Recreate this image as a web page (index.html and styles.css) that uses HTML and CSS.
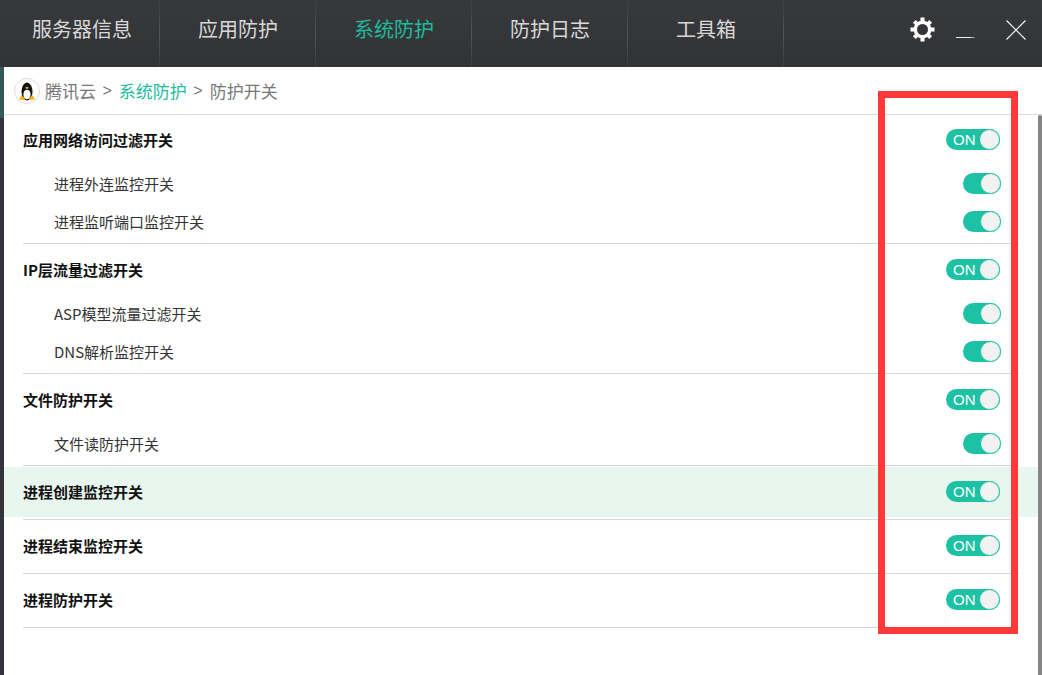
FILE: index.html
```html
<!DOCTYPE html>
<html lang="zh-CN">
<head>
<meta charset="utf-8">
<title>系统防护</title>
<link rel="stylesheet" href="styles.css">
</head>
<body>
<div class="app">
  <header class="topbar">
    <nav class="tabs">
      <a class="tab">服务器信息</a>
      <a class="tab">应用防护</a>
      <a class="tab active">系统防护</a>
      <a class="tab">防护日志</a>
      <a class="tab">工具箱</a>
    </nav>
    <div class="win-controls">
      <svg class="gear" width="25" height="25" viewBox="0 0 26 26">
        <g stroke="#fff" stroke-width="4.2" stroke-linecap="butt">
          <line x1="13" y1="0.5" x2="13" y2="25.5"/>
          <line x1="0.5" y1="13" x2="25.500" y2="13"/>
          <line x1="4.500" y1="4.500" x2="21.500" y2="21.500"/>
          <line x1="21.500" y1="4.500" x2="4.500" y2="21.500"/>
        </g>
        <circle cx="13" cy="13" r="7.500" fill="none" stroke="#fff" stroke-width="3.600"/>
        <circle cx="13" cy="13" r="5.700" fill="#343538"/>
      </svg>
      <span class="minimize"></span>
      <svg class="close" width="20" height="20" viewBox="0 0 20 20">
        <path d="M0.5 0.5L19.5 19.5M19.5 0.5L0.5 19.5" stroke="#fff" stroke-width="1.1" fill="none"/>
      </svg>
    </div>
  </header>
  <div class="body">
    <div class="crumbs">
      <svg class="logo" width="26" height="26" viewBox="0 0 26 26">
        <circle cx="13" cy="13" r="12.500" fill="#fff" stroke="#ddd"/>
        <ellipse cx="13" cy="13.500" rx="5.500" ry="9" fill="#111"/>
        <ellipse cx="13" cy="16.500" rx="3.600" ry="4.800" fill="#fff"/>
        <path d="M12 9h2l.8 1-1.800 1-1.800-1z" fill="#f5b400"/>
        <path d="M5 21.500l2.800-4.500 2.900 3.500 0 1.500z M21 21.500l-2.800-4.500-2.900 3.500 0 1.500z" fill="#f5b400"/>
      </svg>
      <span>腾讯云</span><span class="sep">&gt;</span><span class="current">系统防护</span><span class="sep">&gt;</span><span>防护开关</span>
    </div>
    <main class="settings">
      <section class="group">
        <div class="row head"><span>应用网络访问过滤开关</span><span class="switch labeled">ON<i class="knob"></i></span></div>
        <div class="row sub"><span>进程外连监控开关</span><span class="switch"><i class="knob"></i></span></div>
        <div class="row sub"><span>进程监听端口监控开关</span><span class="switch"><i class="knob"></i></span></div>
      </section>
      <section class="group">
        <div class="row head"><span>IP层流量过滤开关</span><span class="switch labeled">ON<i class="knob"></i></span></div>
        <div class="row sub"><span>ASP模型流量过滤开关</span><span class="switch"><i class="knob"></i></span></div>
        <div class="row sub"><span>DNS解析监控开关</span><span class="switch"><i class="knob"></i></span></div>
      </section>
      <section class="group">
        <div class="row head"><span>文件防护开关</span><span class="switch labeled">ON<i class="knob"></i></span></div>
        <div class="row sub"><span>文件读防护开关</span><span class="switch"><i class="knob"></i></span></div>
      </section>
      <section class="group hover">
        <div class="row head"><span>进程创建监控开关</span><span class="switch labeled">ON<i class="knob"></i></span></div>
      </section>
      <section class="group">
        <div class="row head"><span>进程结束监控开关</span><span class="switch labeled">ON<i class="knob"></i></span></div>
      </section>
      <section class="group">
        <div class="row head"><span>进程防护开关</span><span class="switch labeled">ON<i class="knob"></i></span></div>
      </section>
    </main>
    <div class="scrollbar"></div>
  </div>
  <div class="highlight-box"></div>
</div>
</body>
</html>
```
FILE: styles.css
```css
* { box-sizing: border-box; }
html, body { margin: 0; padding: 0; }
body {
  width: 1042px;
  height: 675px;
  overflow: hidden;
  background: #333437;
  font-family: "Noto Sans CJK SC", "Liberation Sans", sans-serif;
}
.app {
  position: relative;
  width: 1042px;
  height: 675px;
  display: flex;
  flex-direction: column;
}
.topbar {
  height: 67px;
  flex: none;
  padding-left: 4px;
  display: flex;
  justify-content: space-between;
  background: linear-gradient(#38393c, #323335);
}
.tabs { display: flex; }
.tab {
  width: 156px;
  display: flex;
  align-items: center;
  justify-content: center;
  padding: 0 0 10px 1px;
  font-size: 20px;
  color: #d8d8d8;
  border-right: 1px solid;
  border-image: linear-gradient(#3a3b3e, #55565a 50%, #3a3b3e) 1;
}
.tab.active { color: #1dbb9c; }
.win-controls {
  width: 132px;
  display: flex;
  align-items: flex-start;
}
.gear { margin: 17px 0 0 0; flex: none; }
.minimize {
  width: 19px;
  height: 1px;
  margin: 37px 0 0 21px;
  background: linear-gradient(90deg, #f0f0f0 70%, #77787a);
  flex: none;
}
.close { margin: 20px 0 0 31px; flex: none; }
.body {
  flex: 1;
  margin-left: 4px;
  display: flex;
  flex-direction: column;
  background: #fff;
  position: relative;
}
.body::before {
  content: "";
  position: absolute;
  left: -4px;
  top: 0;
  width: 4px;
  height: 51px;
  background: #2f5a55;
}
.crumbs {
  height: 48px;
  flex: none;
  padding: 0 0 0 10px;
  display: flex;
  align-items: center;
  border-bottom: 1px solid #dcdcdc;
  font-size: 17px;
  color: #777;
}
.logo { margin-right: 5px; flex: none; }
.sep { margin: 0 7px 0 6.500px; font-family: "Liberation Sans", sans-serif; font-size: 16px; }
.current { color: #1dbb9c; }
.settings { width: 1034px; }
.group {
  padding-bottom: 2px;
  margin-bottom: 2px;
  position: relative;
}
.group::after {
  content: "";
  position: absolute;
  left: 19px;
  right: 19px;
  bottom: -1px;
  height: 1px;
  background: #d6d6d6;
}
.row {
  display: flex;
  align-items: center;
  justify-content: space-between;
  padding: 0 38px 2px 19px;
  font-size: 15px;
  color: #222;
}
.row.head {
  height: 50px;
  font-weight: 700;
  color: #111;
}
.row.sub {
  height: 38px;
  padding-left: 50px;
  color: #333;
}
.group.hover .row { background: #e7f6ee; }
.switch {
  position: relative;
  display: block;
  width: 38px;
  height: 21px;
  border-radius: 11px;
  background: #1dc2a4;
  margin-right: -1px;
  font-size: 15px;
  line-height: 21px;
  font-family: "Liberation Sans", sans-serif;
  font-weight: 400;
  color: #fff;
  padding-left: 7px;
}
.switch.labeled {
  width: 54px;
  margin-right: 0;
}
.knob {
  position: absolute;
  right: 0;
  top: 0;
  width: 21px;
  height: 21px;
  border-radius: 50%;
  background: #f2f2f2;
  border: 1px solid #1dc2a4;
}
.scrollbar {
  position: absolute;
  right: 0;
  top: 48px;
  bottom: 0;
  width: 4px;
  background: #858585;
  border-radius: 2px 2px 0 0;
}
.highlight-box {
  position: absolute;
  left: 878px;
  top: 91px;
  width: 140px;
  height: 543px;
  border: 7px solid #ff3838;
  pointer-events: none;
}
```
